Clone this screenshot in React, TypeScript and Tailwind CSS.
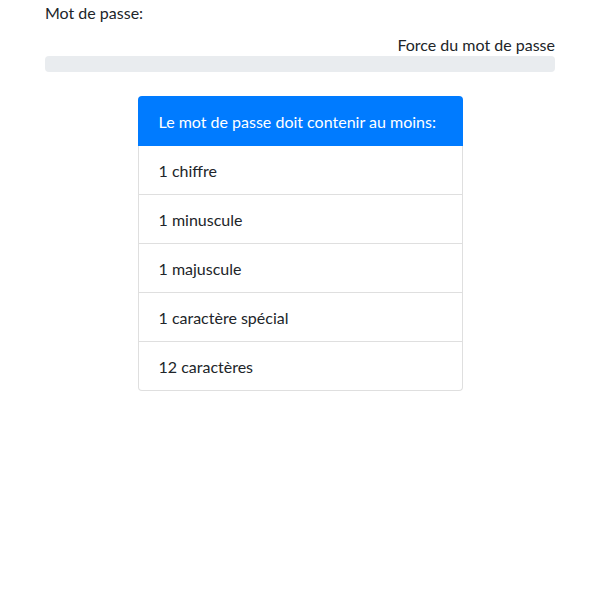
export default function App() {
  const items = ["1 chiffre", "1 minuscule", "1 majuscule", "1 caractère spécial", "12 caractères"];
  return (
    <div className="w-[600px] h-[600px] bg-white text-[#212529] text-[16px] leading-[24px]" style={{ fontFamily: 'Lato, "Noto Sans", sans-serif' }}>
      <div className="mx-[45px] w-[510px]">
        <div className="h-[24px] pt-px">Mot de passe:</div>
        <div className="mt-[8px] text-right h-[24px] pt-px">Force du mot de passe</div>
        <div className="h-[16px] rounded-[4px] bg-[#e9ecef]"></div>
        <div className="mt-[24px] mx-auto w-[325px] flex flex-col">
          <div className="h-[50px] bg-[#007bff] text-white px-[21px] pt-[2px] flex items-center whitespace-nowrap rounded-t-[4px]">Le mot de passe doit contenir au moins:</div>
          {items.map((t, i) => (
            <div key={i} className={"h-[49px] px-[20px] pt-[2px] flex items-center border-x border-b border-[#dfdfdf]" + (i === items.length - 1 ? " rounded-b-[4px]" : "")}>{t}</div>
          ))}
        </div>
      </div>
    </div>
  );
}
